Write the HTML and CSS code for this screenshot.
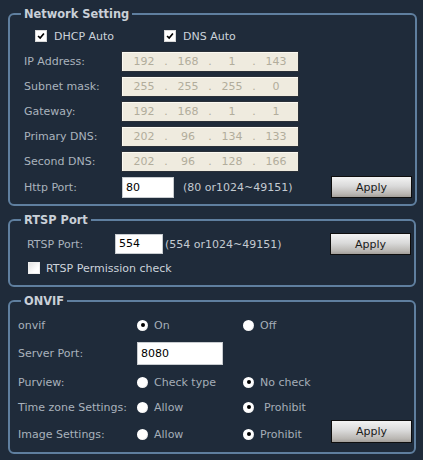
FILE: index.html
```html
<!DOCTYPE html>
<html>
<head>
<meta charset="utf-8">
<link rel="stylesheet" href="styles.css">
</head>
<body>
<div class="page">

<fieldset class="group net">
  <legend>Network Setting</legend>
  <div class="checks">
    <span class="chk"><span class="box"><svg viewBox="0 0 12 12"><path d="M2.5 6 L5 8.5 L9.5 3" fill="none" stroke="#000" stroke-width="2"/></svg></span>DHCP Auto</span>
    <span class="chk dns"><span class="box"><svg viewBox="0 0 12 12"><path d="M2.5 6 L5 8.5 L9.5 3" fill="none" stroke="#000" stroke-width="2"/></svg></span>DNS Auto</span>
  </div>
  <div class="row"><span class="lbl">IP Address:</span><div class="ip"><span>192</span><i>.</i><span>168</span><i>.</i><span>1</span><i>.</i><span>143</span></div></div>
  <div class="row"><span class="lbl">Subnet mask:</span><div class="ip"><span>255</span><i>.</i><span>255</span><i>.</i><span>255</span><i>.</i><span>0</span></div></div>
  <div class="row"><span class="lbl">Gateway:</span><div class="ip"><span>192</span><i>.</i><span>168</span><i>.</i><span>1</span><i>.</i><span>1</span></div></div>
  <div class="row"><span class="lbl">Primary DNS:</span><div class="ip"><span>202</span><i>.</i><span>96</span><i>.</i><span>134</span><i>.</i><span>133</span></div></div>
  <div class="row"><span class="lbl">Second DNS:</span><div class="ip"><span>202</span><i>.</i><span>96</span><i>.</i><span>128</span><i>.</i><span>166</span></div></div>
  <div class="row tall"><span class="lbl">Http Port:</span><span class="field http">80</span><span class="hint">(80 or1024~49151)</span><button class="apply">Apply</button></div>
</fieldset>

<fieldset class="group rtsp">
  <legend>RTSP Port</legend>
  <div class="row tall"><span class="lbl">RTSP Port:</span><span class="field rport">554</span><span class="hint near">(554 or1024~49151)</span><button class="apply">Apply</button></div>
  <div class="checks perm"><span class="chk"><span class="box empty"></span>RTSP Permission check</span></div>
</fieldset>

<fieldset class="group onvif">
  <legend>ONVIF</legend>
  <div class="orow"><span class="olbl">onvif</span><span class="opt"><span class="radio on"></span>On</span><span class="opt"><span class="radio"></span>Off</span></div>
  <div class="orow port"><span class="olbl">Server Port:</span><span class="field sport">8080</span></div>
  <div class="orow"><span class="olbl">Purview:</span><span class="opt"><span class="radio"></span>Check type</span><span class="opt"><span class="radio on"></span>No check</span></div>
  <div class="orow"><span class="olbl">Time zone Settings:</span><span class="opt"><span class="radio"></span>Allow</span><span class="opt wide"><span class="radio on"></span>Prohibit</span></div>
  <div class="orow last"><span class="olbl">Image Settings:</span><span class="opt"><span class="radio"></span>Allow</span><span class="opt short"><span class="radio on"></span>Prohibit</span><button class="apply">Apply</button></div>
</fieldset>

</div>
</body>
</html>
```

FILE: styles.css
```css
* { box-sizing: border-box; }
html, body { margin: 0; padding: 0; }
body {
  background: #1f2b3a;
  font-family: "DejaVu Sans", Verdana, sans-serif;
  font-size: 11px;
  color: #aab3bd;
  width: 423px;
  height: 460px;
  overflow: hidden;
}
.page { padding: 7px 0 0 8px; }

.group {
  margin: 0 0 7px 0;
  border: 2px solid #5f7f9f;
  border-radius: 6px;
  min-inline-size: 0;
  width: 409px;
}
.group legend {
  padding: 0 3px;
  font-weight: bold;
  font-size: 11.4px;
  line-height: 14px;
  color: #c9d0d8;
}
.net { padding: 7px 3px 6px 14px; }
.net legend { margin-left: -3px; }
.rtsp { width: 408px; padding: 6px 3px 9px 17px; }
.rtsp legend { margin-left: -6px; }
.onvif { width: 408px; padding: 9px 2px 9px 8px; }
.onvif legend { margin-left: 3px; }

.checks { display: flex; height: 16px; align-items: center; margin-bottom: 7px; }
.chk { display: flex; align-items: center; color: #ccd3da; margin-left: 11px; }
.chk.dns { margin-left: 50px; }
.box {
  width: 12px; height: 12px; background: #fff; border: 1px solid #d8d8d8;
  margin-right: 7px; display: flex;
}
.box svg { width: 10px; height: 10px; }
.box.empty { background: linear-gradient(135deg, #e2e2e2, #fff 70%); border-color: #eee; }
.perm { margin: 5px 0 0 0; }
.perm .chk { margin-left: 1px; }
.perm .box { margin-right: 6px; }

.row { display: flex; align-items: center; height: 21px; margin-bottom: 4px; }
.row.tall { height: 22px; margin-bottom: 0; }
.lbl { width: 97px; flex: none; }
.rtsp .lbl { width: 88px; }

.ip {
  width: 178px; height: 21px;
  background: #efebdf;
  border: 1px solid #2a3038;
  box-shadow: inset 1px 1px 0 #fbf9f2;
  display: flex; align-items: center;
  padding-left: 4px;
  color: #b2ad9c;
}
.ip span { width: 36px; text-align: center; }
.ip i { width: 8px; font-style: normal; text-align: center; }

.field {
  background: #fff; color: #000;
  height: 21px; line-height: 19px;
  border: 1px solid #c8ccd0;
  padding-left: 3px;
  flex: none;
}
.http { width: 52px; margin-left: 1px; }
.rport { width: 48px; height: 20px; line-height: 18px; }
.sport { width: 86px; height: 23px; line-height: 21px; }
.hint { margin-left: 9px; color: #c3cad1; }
.hint.near { margin-left: 2px; }

.apply {
  margin-left: auto;
  flex: none;
  width: 81px; height: 22px;
  font-family: "DejaVu Sans", Verdana, sans-serif;
  font-size: 11px;
  color: #1a1a1a;
  border: 1px solid #0e0e0e;
  background: linear-gradient(#f3f3f3, #dadada 45%, #b9b6b2 85%, #a29e99);
  padding: 0;
}

.orow { display: flex; align-items: center; height: 16px; margin-bottom: 9px; }
.orow.port { height: 23px; margin-top: 1px; }
.olbl { width: 119px; flex: none; color: #a9b2bc; }
.opt { display: flex; align-items: center; width: 106px; flex: none; color: #a5aeb8; }
.opt.short { width: 80px; }
.opt.wide .radio { margin-right: 10px; }
.radio {
  width: 11px; height: 11px; border-radius: 50%;
  background: radial-gradient(circle at 40% 40%, #fff 55%, #cfcfcf);
  margin-right: 6px; position: relative;
  flex: none;
}
.radio.on::after {
  content: ""; position: absolute; left: 3.5px; top: 3.5px;
  width: 4px; height: 4px; border-radius: 50%; background: #000;
}
.orow.last { height: 23px; margin: -4px 0 0 0; align-items: center; }
.orow.last .olbl, .orow.last .opt { padding-top: 5px; }
.orow.last .apply { width: 81px; height: 23px; }
```
